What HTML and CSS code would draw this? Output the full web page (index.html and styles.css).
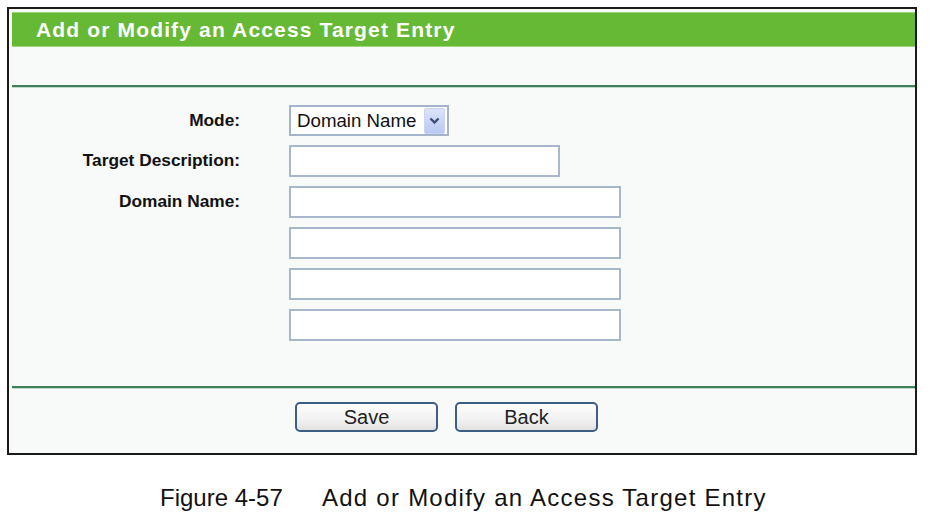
FILE: index.html
```html
<!DOCTYPE html>
<html>
<head>
<meta charset="utf-8">
<link rel="stylesheet" href="styles.css">
</head>
<body>
<div class="frame">
  <div class="title-bar">Add or Modify an Access Target Entry</div>
  <div class="spacer"></div>
  <div class="rule"></div>
  <div class="form">
    <div class="label">Mode:</div>
    <div class="controls">
      <div class="select">
        <span class="select-text">Domain Name</span>
        <span class="select-btn">
          <svg width="11" height="8" viewBox="0 0 11 8"><path d="M1.5 1.5 L5.5 5.5 L9.5 1.5" fill="none" stroke="#3c4f78" stroke-width="2.4"/></svg>
        </span>
      </div>
    </div>
    <div class="label">Target Description:</div>
    <div class="controls">
      <div class="input short"></div>
    </div>
    <div class="label">Domain Name:</div>
    <div class="controls">
      <div class="input"></div>
      <div class="input"></div>
      <div class="input"></div>
      <div class="input"></div>
    </div>
  </div>
  <div class="rule bottom-rule"></div>
  <div class="buttons">
    <button class="btn">Save</button>
    <button class="btn">Back</button>
  </div>
</div>
<p class="caption"><span class="cap-num">Figure 4-57</span><span class="cap-text">Add or Modify an Access Target Entry</span></p>
</body>
</html>
```
FILE: styles.css
```css
html, body {
  margin: 0;
  padding: 0;
  background: #ffffff;
}
body {
  font-family: "Liberation Sans", Arial, sans-serif;
}
.frame {
  margin: 7px 0 0 7px;
  width: 903px;
  height: 441px;
  border: 2px solid #1a1a1a;
  background: #f8f9f9;
  padding: 3px 0 0 3px;
  box-sizing: content-box;
  display: flex;
  flex-direction: column;
}
.title-bar {
  height: 33px;
  background: #66b934;
  border-top: 1px solid #9fd67c;
  border-bottom: 1px solid #9fd67c;
  color: #fff;
  font-weight: bold;
  font-size: 21px;
  line-height: 33px;
  padding-left: 24px;
  letter-spacing: 1.15px;
}
.spacer {
  height: 38px;
}
.rule {
  height: 2px;
  background: #3f7f5c;
  border-bottom: 1px solid #bfd9c8;
}
.form {
  display: grid;
  grid-template-columns: 228px 332px;
  column-gap: 49px;
  row-gap: 9px;
  padding-top: 17px;
  align-items: start;
}
.label {
  text-align: right;
  font-weight: bold;
  font-size: 17.3px;
  color: #111;
  line-height: 30px;
}
.controls {
  display: flex;
  flex-direction: column;
  gap: 9px;
}
.select {
  width: 160px;
  height: 31px;
  box-sizing: border-box;
  border: 2px solid #a3b4cc;
  background: #fff;
  display: flex;
  align-items: center;
  justify-content: space-between;
  padding: 0 2px 0 6px;
}
.select-text {
  font-size: 18.7px;
  color: #111;
}
.select-btn {
  width: 19px;
  height: 24px;
  background: linear-gradient(#dbe4fb, #b9c9f2);
  border: 1px solid #c8d4f0;
  border-radius: 2px;
  display: flex;
  align-items: center;
  justify-content: center;
}
.input {
  width: 332px;
  height: 32px;
  box-sizing: border-box;
  border: 2px solid #a8b8cc;
  background: #fff;
}
.input.short {
  width: 271px;
}
.bottom-rule {
  margin-top: 45px;
}
.buttons {
  display: flex;
  gap: 17px;
  padding-left: 283px;
  padding-top: 13px;
}
.btn {
  width: 143px;
  height: 30px;
  border: 2px solid #3d5f86;
  border-radius: 5px;
  background: linear-gradient(#ffffff, #eeeeee 70%, #e2e2e2);
  font-family: "Liberation Sans", Arial, sans-serif;
  font-size: 20px;
  color: #222;
  padding: 0;
  line-height: 26px;
}
.caption {
  margin: 29px 0 0 160px;
  font-size: 24px;
  color: #111;
  line-height: 28px;
  display: flex;
}
.cap-num {
  width: 162px;
}
.cap-text {
  letter-spacing: 1.25px;
}
```
